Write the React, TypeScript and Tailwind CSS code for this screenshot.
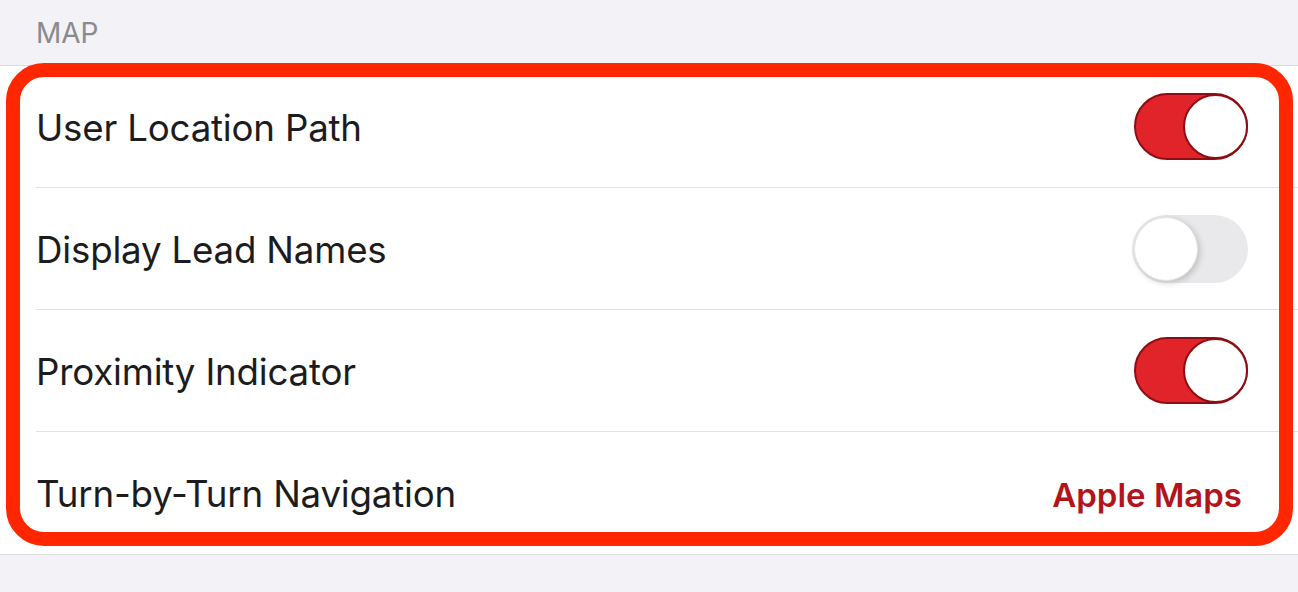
import React from 'react';

const rows = [
  { label: 'User Location Path', kind: 'on' },
  { label: 'Display Lead Names', kind: 'off' },
  { label: 'Proximity Indicator', kind: 'on' },
  { label: 'Turn-by-Turn Navigation', kind: 'value' },
];

function Toggle({ on }: { on: boolean }) {
  if (on) {
    return (
      <div className="w-[114px] h-[67px] rounded-full bg-[#e0242a] border-2 border-[#8e0d12] flex items-center justify-end">
        <div className="w-[65px] h-[65px] -mr-[2px] rounded-full bg-white border-2 border-[#8e0d12]" />
      </div>
    );
  }
  return (
    <div className="w-[116px] h-[68px] rounded-full bg-[#e9e9eb] flex items-center">
      <div className="w-[64px] h-[64px] ml-[2px] rounded-full bg-white shadow-[2px_2px_6px_rgba(0,0,0,0.18)] border border-[#e4e4e6]" />
    </div>
  );
}

export default function App() {
  return (
    <div className="relative w-full h-[592px] bg-[#f2f2f7] overflow-hidden" style={{ fontFamily: 'Inter, "Open Sans", sans-serif' }}>
      <div className="h-[65px] pl-[36px] pt-[15px] text-[28px] text-[#8a8a8e] leading-none">
        <span className="block pt-[4px]">MAP</span>
      </div>
      <div className="bg-white border-t border-b border-[#dcdce0]">
        {rows.map((r, i) => (
          <div key={r.label} className="pl-[36px]">
            <div className={`h-[122px] flex items-center justify-between pr-[50px] ${i < rows.length - 1 ? 'border-b border-[#e2e2e4]' : ''}`}>
              <span className="text-[36.7px] text-[#1c1c1e] tracking-[-0.2px] pt-[2px]">{r.label}</span>
              {r.kind === 'value' ? (
                <span className="text-[33px] font-semibold text-[#b3141c] pt-[6px] pr-[6px]">Apple Maps</span>
              ) : (
                <Toggle on={r.kind === 'on'} />
              )}
            </div>
          </div>
        ))}
      </div>
      <div className="absolute left-[6px] top-[63px] w-[1287px] h-[483px] border-[14px] border-[#ff2600] rounded-[38px] pointer-events-none" />
    </div>
  );
}
